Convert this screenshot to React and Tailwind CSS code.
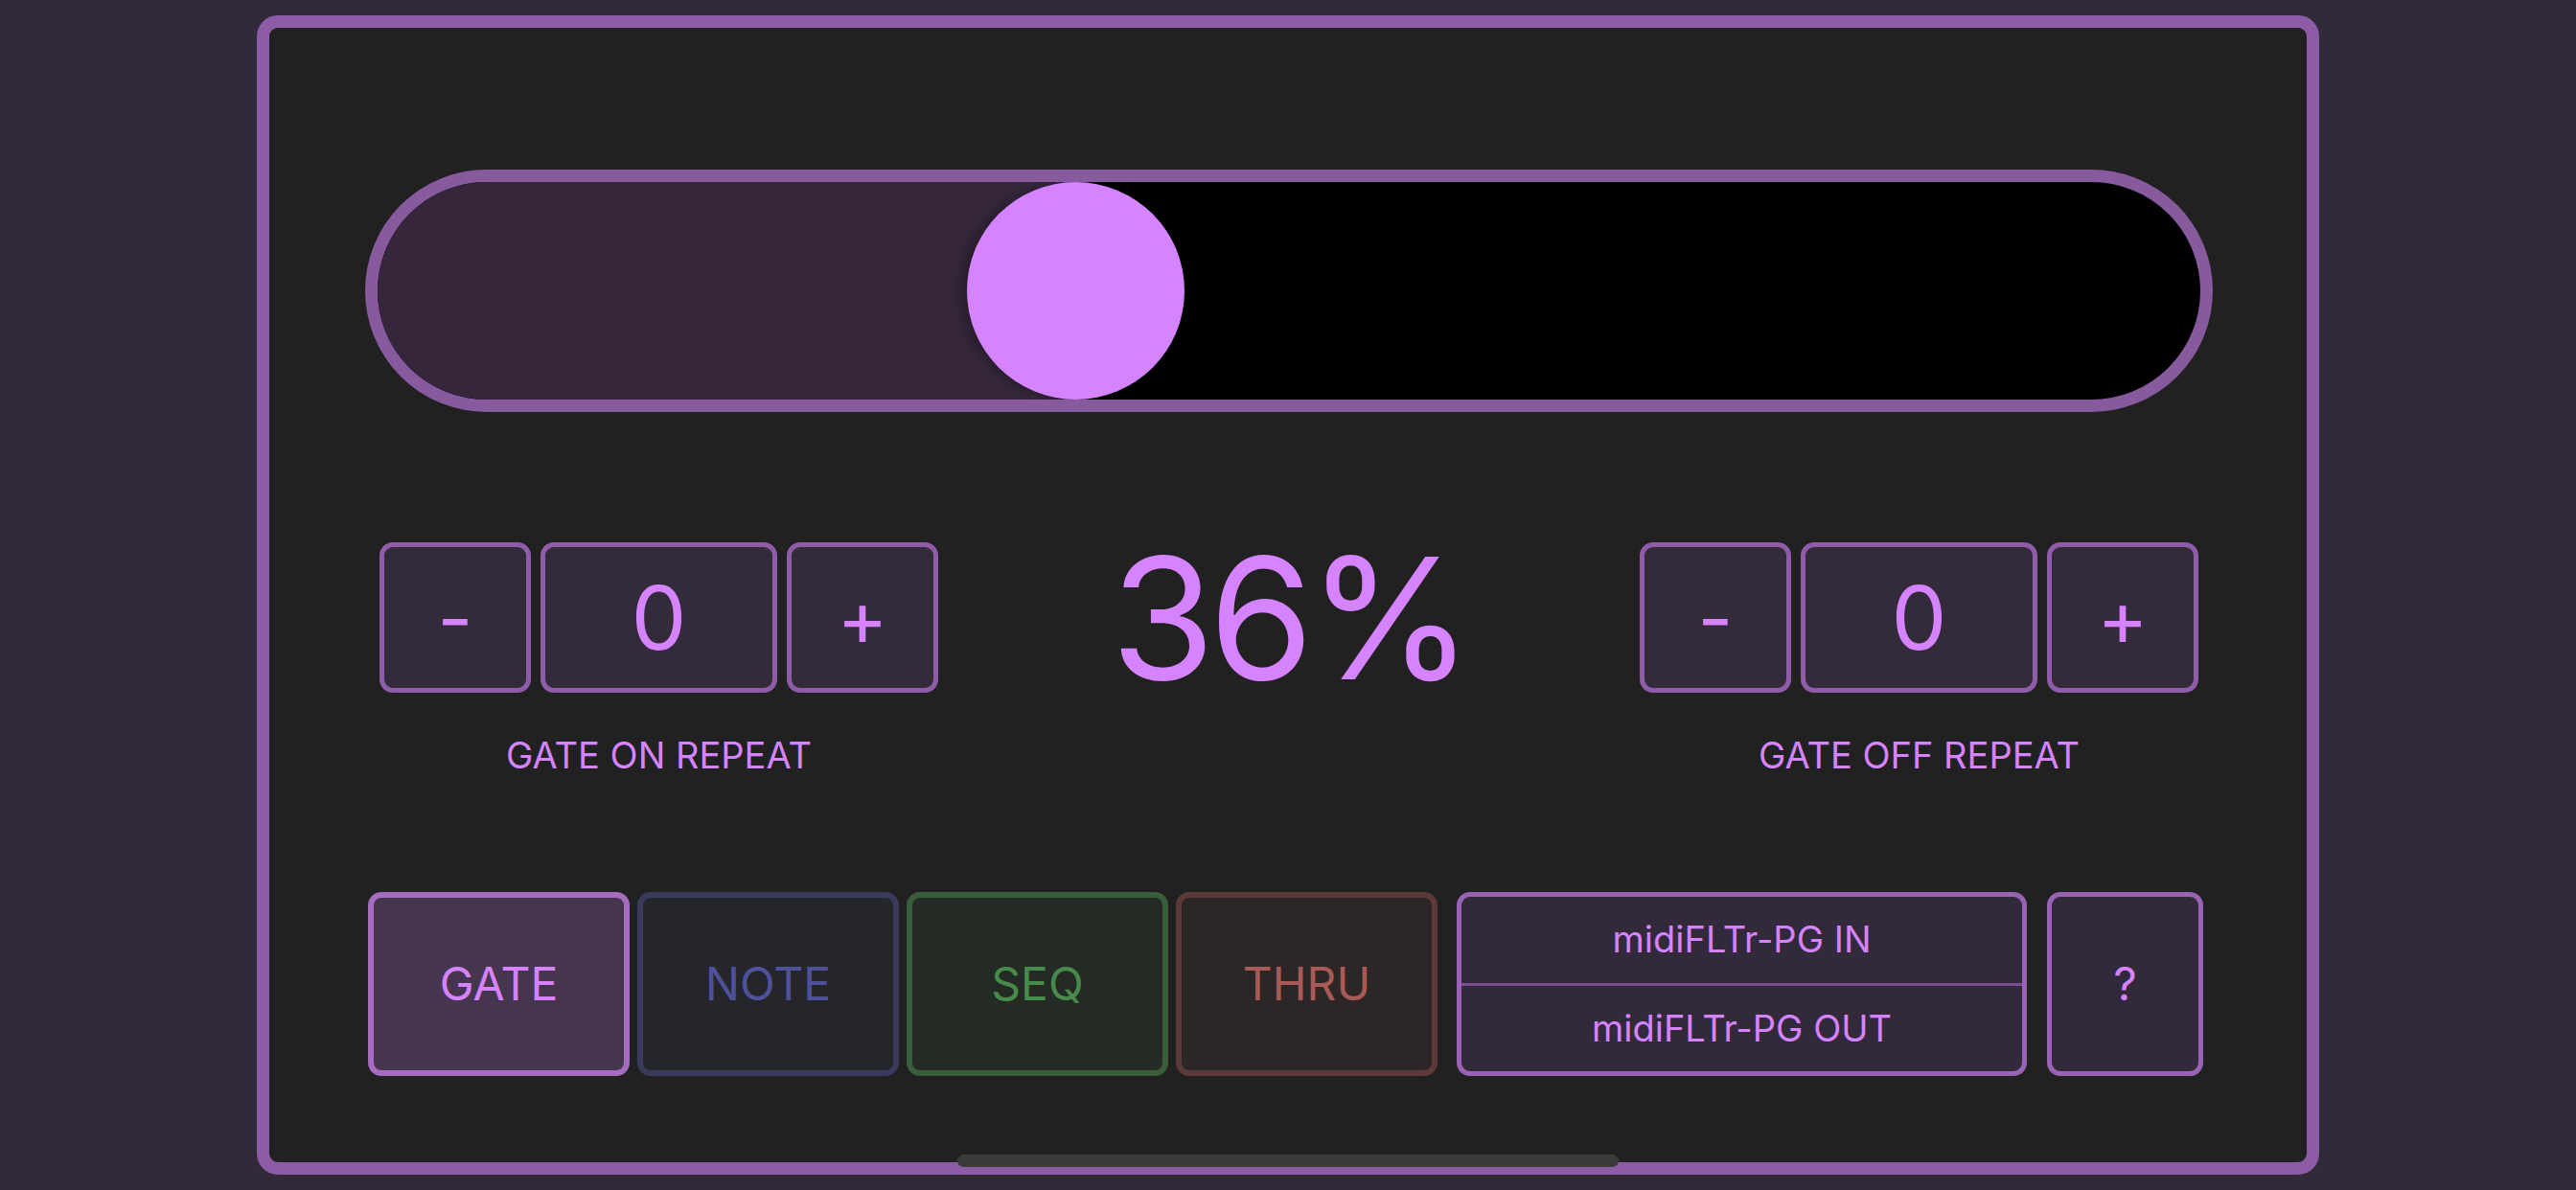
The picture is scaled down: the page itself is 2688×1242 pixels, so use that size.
import React, { useState } from "react";

const font = { fontFamily: "Inter, 'Liberation Sans', sans-serif" };

const Stepper = ({ label, value, onChange }) => {
    return (
        <div className="flex flex-col items-center w-[583px]">
            <div className="flex gap-[10px]">
                <button
                    onClick={() => onChange(value - 1)}
                    className="w-[158px] h-[157px] rounded-[14px] border-[5px] border-[#8e5ca8] bg-[#332b3a] text-[#d683ff] text-[80px] leading-none flex items-center justify-center"
                >
                    -
                </button>
                <div className="w-[247px] h-[157px] rounded-[14px] border-[5px] border-[#8e5ca8] bg-[#332b3a] text-[#d683ff] text-[92px] leading-none flex items-center justify-center">
                    {value}
                </div>
                <button
                    onClick={() => onChange(value + 1)}
                    className="w-[158px] h-[157px] rounded-[14px] border-[5px] border-[#8e5ca8] bg-[#332b3a] text-[#d683ff] text-[80px] leading-none flex items-center justify-center"
                >
                    +
                </button>
            </div>
            <p className="mt-[42px] text-[38px] leading-[46px] text-[#d683ff]">{label}</p>
        </div>
    );
};

const modes = [
    { name: "GATE", cls: "bg-[#46354f] border-[#a66cc0] text-[#d683ff]" },
    { name: "NOTE", cls: "bg-[#25262c] border-[#3a3b5c] text-[#4f529b]" },
    { name: "SEQ", cls: "bg-[#242b24] border-[#3a5e3b] text-[#478a4b]" },
    { name: "THRU", cls: "bg-[#2c2626] border-[#5c3a37] text-[#a85b56]" },
];

export default function App() {
    const [level, setLevel] = useState(0.367);
    const [onRepeat, setOnRepeat] = useState(0);
    const [offRepeat, setOffRepeat] = useState(0);
    const [mode, setMode] = useState("GATE");

    // inner track is 1902 wide, thumb 227
    const travel = 1902 - 227;
    const thumbLeft = Math.round(level * travel);

    return (
        <div style={font} className="relative w-[2688px] h-[1242px] bg-[#322a3a] flex items-center justify-center">
            <div className="w-[2152px] h-[1210px] rounded-[22px] border-[13px] border-[#8c5ca6] bg-[#212121] flex flex-col pl-[100px] pr-[98px] pt-[148px]">
                {/* slider */}
                <div className="h-[253px] rounded-full border-[13px] border-[#875a9d] bg-black">
                    <div className="relative h-full rounded-full overflow-hidden">
                        <div
                            className="absolute left-0 top-0 h-full bg-[#35263b]"
                            style={{ width: thumbLeft + 113 }}
                        />
                        <div
                            className="absolute top-0 w-[227px] h-[227px] rounded-full bg-[#d683ff] shadow-[-6px_0_10px_rgba(0,0,0,0.25)]"
                            style={{ left: thumbLeft }}
                        />
                    </div>
                </div>

                {/* steppers + percent */}
                <div className="mt-[136px] flex items-start pl-[15px] pr-[15px]">
                    <Stepper label="GATE ON REPEAT" value={onRepeat} onChange={setOnRepeat} />
                    <div className="flex-1 h-[157px] flex items-center justify-center">
                        <span className="text-[176px] leading-none tracking-[-0.035em] text-[#d683ff]">
                            {Math.round(level * 100) - 1}%
                        </span>
                    </div>
                    <Stepper label="GATE OFF REPEAT" value={offRepeat} onChange={setOffRepeat} />
                </div>

                {/* bottom row */}
                <div className="mt-[120px] flex items-center pl-[3px]">
                    <div className="flex gap-[8px]">
                        {modes.map((m) => (
                            <button
                                key={m.name}
                                onClick={() => setMode(m.name)}
                                className={`w-[273px] h-[192px] rounded-[14px] border-[6px] text-[48px] leading-none flex items-center justify-center ${m.cls}`}
                            >
                                {m.name}
                            </button>
                        ))}
                    </div>
                    <div className="ml-[20px] w-[595px] h-[192px] rounded-[14px] border-[5px] border-[#9a62b5] bg-[#322a3a] flex flex-col text-[38px] text-[#d683ff]">
                        <div className="flex-1 flex items-center justify-center">midiFLTr-PG IN</div>
                        <div className="h-[3px] bg-[#7a4f90]" />
                        <div className="flex-1 flex items-center justify-center">midiFLTr-PG OUT</div>
                    </div>
                    <button className="ml-[21px] w-[163px] h-[192px] rounded-[14px] border-[5px] border-[#9a62b5] bg-[#322a3a] text-[48px] text-[#d683ff] flex items-center justify-center">
                        ?
                    </button>
                </div>
            </div>

            {/* home indicator */}
            <div className="absolute left-[999px] top-[1205px] w-[690px] h-[13px] rounded-full bg-[#3b3b3b]" />
        </div>
    );
}
